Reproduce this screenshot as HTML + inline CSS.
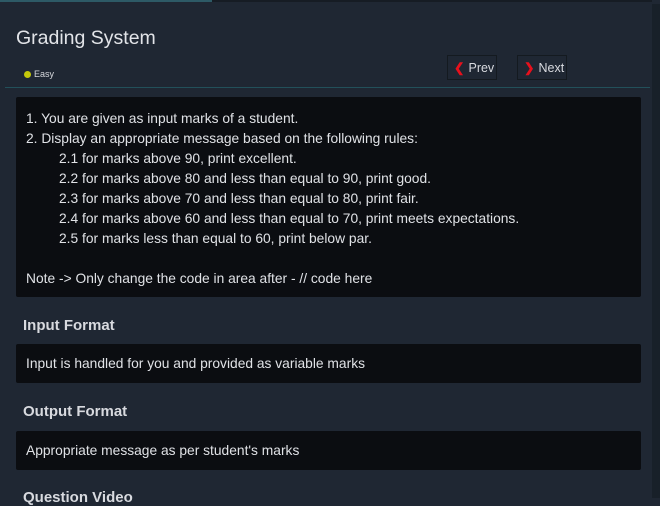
<!DOCTYPE html>
<html><head><meta charset="utf-8"><style>
*{margin:0;padding:0;box-sizing:border-box}
body{width:660px;height:498px;overflow:hidden;background:#1f2733;font-family:"Liberation Sans",sans-serif;color:#e4e6ea;position:relative}
.top1{position:absolute;left:0;top:0;width:212px;height:2px;background:#2d5a66}
.top2{position:absolute;left:212px;top:0;width:440px;height:2px;background:#161c24}
.sb{position:absolute;left:652px;top:4px;width:8px;height:494px;background:#182029}
.title{position:absolute;left:16px;top:27px;font-size:19.5px;color:#e2e4e8}
.easy{position:absolute;left:24px;top:69px;font-size:9px;color:#d6d8dc}
.easy i{display:inline-block;width:7px;height:7px;border-radius:50%;background:#c4c80a;margin-right:3px;vertical-align:-1px}
.btn{position:absolute;top:55px;height:25px;border:1px solid #141a20;font-size:12.5px;color:#d8dadf;line-height:24px;padding-left:6px;white-space:nowrap}
.btn b{color:#e8101c;font-weight:bold;margin-right:4px}
.hr{position:absolute;left:5px;top:87px;width:645px;height:1px;background:#22505a}
.box{position:absolute;left:16px;width:625px;background:#0b0d11;border-radius:2px;font-size:13.8px;color:#e0e2e6}
.p{padding:12px 0 0 10px;line-height:20px}
.p div.i{padding-left:33px}
h3{position:absolute;left:23px;font-size:15px;font-weight:bold;color:#d8dadf}
</style></head><body>
<div class="top1"></div><div class="top2"></div><div class="sb"></div>
<div class="title">Grading System</div>
<div class="easy"><i></i>Easy</div>
<div class="btn" style="left:447px;width:50px"><b>&#10094;</b>Prev</div>
<div class="btn" style="left:517px;width:50px"><b>&#10095;</b>Next</div>
<div class="hr"></div>
<div class="box" style="top:97px;height:200px"><div class="p">
<div>1. You are given as input marks of a student.</div>
<div>2. Display an appropriate message based on the following rules:</div>
<div class="i">2.1 for marks above 90, print excellent.</div>
<div class="i">2.2 for marks above 80 and less than equal to 90, print good.</div>
<div class="i">2.3 for marks above 70 and less than equal to 80, print fair.</div>
<div class="i">2.4 for marks above 60 and less than equal to 70, print meets expectations.</div>
<div class="i">2.5 for marks less than equal to 60, print below par.</div>
<div>&nbsp;</div>
<div>Note -&gt; Only change the code in area after - // code here</div>
</div></div>
<h3 style="top:317px">Input Format</h3>
<div class="box" style="top:344px;height:39px;padding:12px 0 0 10px">Input is handled for you and provided as variable marks</div>
<h3 style="top:403px">Output Format</h3>
<div class="box" style="top:431px;height:39px;padding:12px 0 0 10px">Appropriate message as per student's marks</div>
<h3 style="top:489px">Question Video</h3>
</body></html>
